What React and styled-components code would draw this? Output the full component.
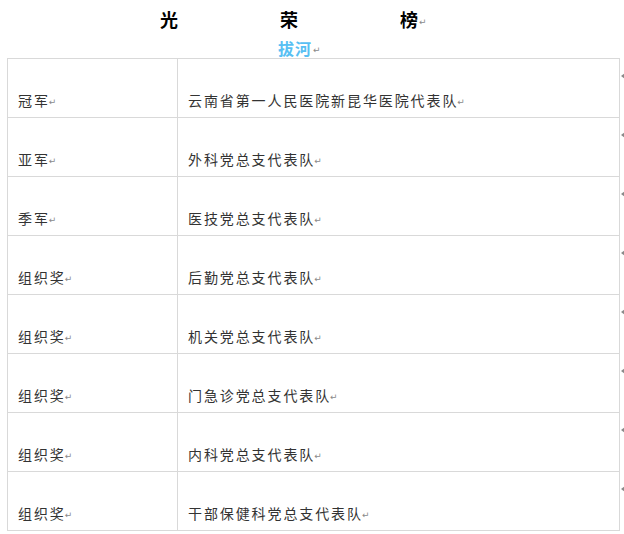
import React from "react";
import styled, { createGlobalStyle } from "styled-components";

const GlobalStyle = createGlobalStyle`
  body {
    margin: 0;
    background: #ffffff;
    font-family: "Noto Sans CJK SC", "Noto Sans", sans-serif;
    color: #333333;
  }
`;

const Page = styled.div`
  width: 624px;
  height: 534px;
  overflow: hidden;
  background: #ffffff;
`;

const TitleRow = styled.div`
  display: flex;
  align-items: center;
  gap: 102px;
  padding-left: 160px;
  height: 37px;
  font-size: 18px;
  font-weight: 700;
  color: #000000;
`;

const TitleChar = styled.span`
  display: flex;
  align-items: center;
  width: 18px;
  line-height: 18px;
`;

const SubTitle = styled.div`
  display: flex;
  align-items: center;
  padding-left: 278px;
  height: 21px;
  font-size: 16px;
  font-weight: 700;
  color: #58bff3;
  letter-spacing: 1px;
`;

const Mark = styled.span`
  font-family: "DejaVu Sans", sans-serif;
  font-size: 9px;
  font-weight: 400;
  color: #8a8a8a;
  letter-spacing: 0;
  margin-left: ${({ $tight }) => ($tight ? "-1px" : "1px")};
  position: relative;
  top: ${({ $lift }) => ($lift ? "3px" : "2px")};
`;

const Table = styled.div`
  margin-left: 7px;
  width: 613px;
  display: flex;
  flex-direction: column;
`;

const Row = styled.div`
  position: relative;
  display: grid;
  grid-template-columns: 170px 1fr;
  height: 59px;
  box-sizing: border-box;
  border-left: 1px solid #d9d9d9;
  border-right: 1px solid #d9d9d9;
  border-top: 1px solid #d9d9d9;

  &:last-child {
    border-bottom: 1px solid #d9d9d9;
    height: 60px;
  }
`;

const Cell = styled.div`
  display: flex;
  align-items: flex-end;
  padding: 0 0 9px 10px;
  font-size: 14px;
  line-height: 16px;
  letter-spacing: 1.9px;
  border-left: ${({ $divider }) => ($divider ? "1px solid #d9d9d9" : "none")};
  margin-left: ${({ $divider }) => ($divider ? "-1px" : "0")};
`;

const EndMark = styled.span`
  position: absolute;
  right: -6px;
  top: 14px;
  width: 0;
  height: 0;
  border-top: 3px solid transparent;
  border-bottom: 3px solid transparent;
  border-right: 4px solid #8a8a8a;
`;

const rows = [
  ["冠军", "云南省第一人民医院新昆华医院代表队"],
  ["亚军", "外科党总支代表队"],
  ["季军", "医技党总支代表队"],
  ["组织奖", "后勤党总支代表队"],
  ["组织奖", "机关党总支代表队"],
  ["组织奖", "门急诊党总支代表队"],
  ["组织奖", "内科党总支代表队"],
  ["组织奖", "干部保健科党总支代表队"],
];

export default function App() {
  return (
    <Page>
      <GlobalStyle />
      <TitleRow>
        <TitleChar>光</TitleChar>
        <TitleChar>荣</TitleChar>
        <TitleChar>
          榜<Mark $lift>↵</Mark>
        </TitleChar>
      </TitleRow>
      <SubTitle>
        拔河<Mark>↵</Mark>
      </SubTitle>
      <Table>
        {rows.map(([award, team], i) => (
          <Row key={i}>
            <Cell>
              {award}
              <Mark $tight>↵</Mark>
            </Cell>
            <Cell $divider>
              {team}
              <Mark $tight>↵</Mark>
            </Cell>
            <EndMark />
          </Row>
        ))}
      </Table>
    </Page>
  );
}
